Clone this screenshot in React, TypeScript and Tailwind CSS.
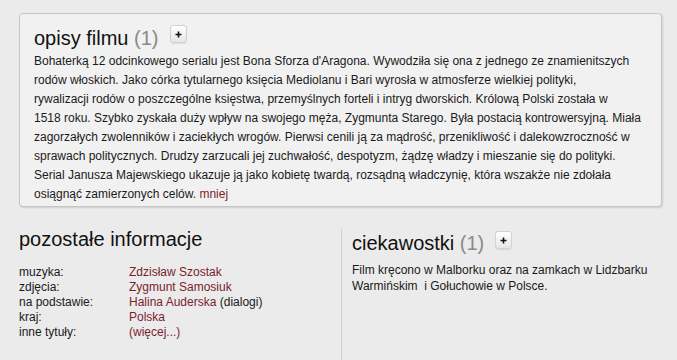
const link = "text-[#7b1d2d]";

function PlusButton({ className = "" }: { className?: string }) {
  return (
    <button
      type="button"
      className={`flex h-[18px] w-[17px] items-center justify-center rounded-[3px] border border-[#d2d2d2] bg-gradient-to-b from-white to-[#e6e6e6] shadow-[0_1px_1px_rgba(0,0,0,0.08)] ${className}`}
    >
      <svg width="7" height="7" viewBox="0 0 7 7">
        <path d="M3.5 0.5v6M0.5 3.5h6" stroke="#111" strokeWidth="1.6" />
      </svg>
    </button>
  );
}

function SectionTitle({ title, count }: { title: string; count?: number }) {
  return (
    <h2 className="text-[20px] leading-[24px] font-normal text-[#111]">
      {title}
      {count !== undefined && <span className="text-[#8a8a8a]"> ({count})</span>}
    </h2>
  );
}

const info: { label: string; value: string; extra?: string }[] = [
  { label: "muzyka:", value: "Zdzisław Szostak" },
  { label: "zdjęcia:", value: "Zygmunt Samosiuk" },
  { label: "na podstawie:", value: "Halina Auderska", extra: " (dialogi)" },
  { label: "kraj:", value: "Polska" },
  { label: "inne tytuły:", value: "(więcej...)" },
];

const description = [
  "Bohaterką 12 odcinkowego serialu jest Bona Sforza d'Aragona. Wywodziła się ona z jednego ze znamienitszych",
  "rodów włoskich. Jako córka tytularnego księcia Mediolanu i Bari wyrosła w atmosferze wielkiej polityki,",
  "rywalizacji rodów o poszczególne księstwa, przemyślnych forteli i intryg dworskich. Królową Polski została w",
  "1518 roku. Szybko zyskała duży wpływ na swojego męża, Zygmunta Starego. Była postacią kontrowersyjną. Miała",
  "zagorzałych zwolenników i zaciekłych wrogów. Pierwsi cenili ją za mądrość, przenikliwość i dalekowzroczność w",
  "sprawach politycznych. Drudzy zarzucali jej zuchwałość, despotyzm, żądzę władzy i mieszanie się do polityki.",
  "Serial Janusza Majewskiego ukazuje ją jako kobietę twardą, rozsądną władczynię, która wszakże nie zdołała",
];

export default function App() {
  return (
    <div
      className="flex h-[360px] w-full flex-col overflow-hidden bg-[#ebebeb] pt-[13px] text-[#1a1a1a]"
      style={{ fontFamily: '"Liberation Sans", Arial, sans-serif' }}
    >
      {/* opisy filmu */}
      <section className="ml-[19px] w-[643px] rounded-[4px] border border-[#c6c6c6] bg-[#f1f1f1] pt-[12px] pr-[12px] pb-[2px] pl-[14px] shadow-[1px_1px_2px_rgba(0,0,0,0.12)]">
        <div className="flex items-start">
          <SectionTitle title="opisy filmu" count={1} />
          <PlusButton className="ml-[11px] -mt-px" />
        </div>
        <p className="mt-[2px] text-[12px] leading-[19px]">
          {description.map((line) => (
            <span key={line}>
              {line}
              <br />
            </span>
          ))}
          osiągnąć zamierzonych celów. <a className={link}>mniej</a>
        </p>
      </section>

      <div className="mt-[20px] flex flex-1">
        {/* pozostałe informacje */}
        <section className="w-[341px] pl-[19px]">
          <SectionTitle title="pozostałe informacje" />
          <div className="mt-[14px] grid grid-cols-[110px_1fr] text-[12px] leading-[15px]">
            {info.map((row) => (
              <div key={row.label} className="contents">
                <span>{row.label}</span>
                <span>
                  <a className={link}>{row.value}</a>
                  {row.extra}
                </span>
              </div>
            ))}
          </div>
        </section>

        {/* ciekawostki */}
        <section className="mt-[2px] flex-1 border-l border-[#cfcfcf] pt-[2px] pl-[10px]">
          <div className="flex items-start">
            <SectionTitle title="ciekawostki" count={1} />
            <PlusButton className="ml-[11px]" />
          </div>
          <p className="mt-[7px] w-[300px] text-[12px] leading-[16px]">
            Film kręcono w Malborku oraz na zamkach w Lidzbarku Warmińskim{"\u00a0"} i Gołuchowie w Polsce.
          </p>
        </section>
      </div>
    </div>
  );
}
